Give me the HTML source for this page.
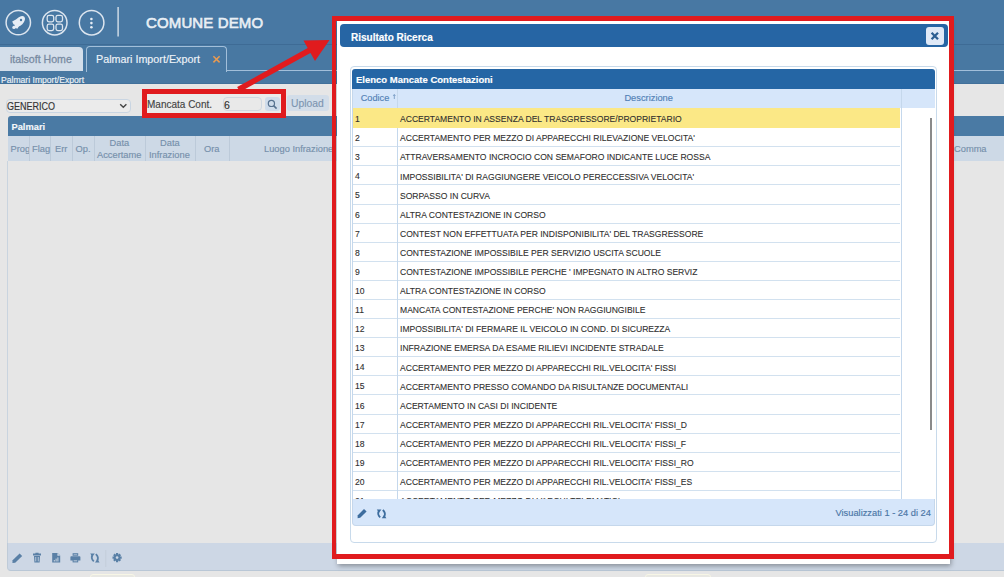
<!DOCTYPE html>
<html><head><meta charset="utf-8">
<style>
*{margin:0;padding:0;box-sizing:border-box}
html,body{width:1004px;height:577px;overflow:hidden}
body{position:relative;background:#e6e6e6;font-family:"Liberation Sans",sans-serif;color:#333}
.a{position:absolute}
.t{position:absolute;white-space:nowrap;line-height:1;-webkit-text-stroke:0.15px currentColor}
.hdr{left:0;top:0;width:1004px;height:44px;background:#4878a3}
.hdrline{left:0;top:43.5px;width:1004px;height:1.5px;background:#3e6b95}
.tabbar{left:0;top:45px;width:1004px;height:39px;background:#4878a2}
.tab1{left:0;top:47px;width:83px;height:24px;background:#d3deea;border-radius:0 4px 0 0}
.tab2{left:86px;top:46px;width:141px;height:26px;border:1px solid #a2bfda;border-bottom:none;border-radius:4px 4px 0 0;background:#4878a2}
.tabline{left:226px;top:70px;width:778px;height:1px;background:#a2bfda}
.ph{left:8px;top:116px;width:996px;height:20px;background:#4a7aa4;border-radius:3px 0 0 0}
.pch{left:8px;top:136px;width:996px;height:25px;background:#cdd9e6}
.pbody{left:7px;top:161px;width:997px;height:382px;border-left:1px solid #c9d4df}
.pfoot{left:7px;top:543px;width:997px;height:28px;background:#cdd7e5;border-left:1px solid #bfcbd8;border-bottom:1px solid #b9c7d6;border-radius:0 0 0 4px}
.cd{position:absolute;top:136px;width:1px;height:25px;background:#bccad9}
.ch{color:#7690ab;font-size:9.3px}
.modal{left:337px;top:20px;width:613px;height:544px;background:#fff;box-shadow:1px 2px 5px rgba(0,0,0,.35)}
.mtitle{left:340px;top:24px;width:608px;height:23px;background:#2665a4;border-radius:4px}
.mclose{left:926px;top:27px;width:18px;height:18px;background:#dfe9f7;border-radius:3px}
.ipanel{left:350px;top:66px;width:587px;height:477px;border:1px solid #c8daeb;border-radius:4px}
.ihead{left:352px;top:69px;width:583px;height:20px;background:#2566a5;border-radius:3px 3px 0 0}
.icolh{left:352px;top:89px;width:583px;height:19px;background:#d6e6fa}
.row{left:0;width:549px;background:#fff;border-top:1px solid #d2e1ef}
.row.sel{background:#fbe886;border-top:none}
.row span{position:absolute;font-size:9.7px;line-height:10px;color:#2e2e2e;white-space:nowrap;-webkit-text-stroke:0.1px #2e2e2e;transform:scaleX(0.883);transform-origin:0 0}
.row .c{left:3px;font-size:8.6px !important;transform:none !important;-webkit-text-stroke:0.1px #2e2e2e !important;margin-top:-0.2px}
.row.sel{z-index:1}
.row .d{left:48px}
.ifoot{left:352px;top:499px;width:583px;height:27px;background:#d6e6fa;border:1px solid #c5d7eb;border-top:none;border-radius:0 0 4px 4px}
.red{border:5px solid #e01b1e}
</style></head><body>

<!-- header -->
<div class="a hdr"></div>
<div class="a hdrline"></div>
<div class="a tabbar"></div>
<svg class="a" style="left:0;top:0" width="120" height="44" viewBox="0 0 120 44">
  <g fill="none" stroke="#dce5ef" stroke-width="1.5">
    <circle cx="18.3" cy="22.6" r="12.2"/>
    <circle cx="54.7" cy="22.7" r="12.3"/>
    <circle cx="91.6" cy="22.7" r="12.3"/>
    <rect x="47.2" y="15.4" width="6.5" height="6.5" rx="1.8" stroke-width="1.3"/>
    <rect x="56.0" y="15.4" width="6.5" height="6.5" rx="1.8" stroke-width="1.3"/>
    <rect x="47.2" y="24.1" width="6.5" height="6.5" rx="1.8" stroke-width="1.3"/>
    <rect x="56.0" y="24.1" width="6.5" height="6.5" rx="1.8" stroke-width="1.3"/>
  </g>
  <g fill="#e6edf5">
    <circle cx="91.4" cy="19" r="1.3"/>
    <circle cx="91.4" cy="23.1" r="1.3"/>
    <circle cx="91.4" cy="27.2" r="1.3"/>
    <!-- rocket -->
    <ellipse cx="19.6" cy="21.4" rx="6.6" ry="3.9" transform="rotate(-45 19.6 21.4)"/>
    <path d="M16.8 19 L12.2 21.6 L13.6 24.6 L16 23.4 Z"/>
    <path d="M20 24.2 L17.4 28.8 L14.4 27.4 L15.6 25 Z"/>
    <circle cx="14" cy="27.4" r="1.7"/>
  </g>
  <circle cx="21" cy="20" r="1.2" fill="#4a7aa4"/>
  <rect x="117.4" y="7" width="1.4" height="29.5" fill="#d5e0ea"/>
</svg>
<div class="t" style="left:146px;top:15px;font-size:15px;color:#e9eff5;letter-spacing:0.13px;-webkit-text-stroke:0.6px #e9eff5">COMUNE DEMO</div>

<div class="a tab1"></div>
<div class="t" style="left:10px;top:54px;font-size:10.6px;color:#788ba2;-webkit-text-stroke:0.3px #788ba2">italsoft Home</div>
<div class="a tab2"></div>
<div class="t" style="left:96px;top:54px;font-size:10.75px;color:#eef3f8">Palmari Import/Export</div>
<svg class="a" style="left:212px;top:55px" width="9" height="9" viewBox="0 0 9 9"><path d="M1.4 1.2 L7.6 7.4 M7.6 1.2 L1.4 7.4" stroke="#e99a50" stroke-width="1.5"/></svg>
<div class="a tabline"></div>
<div class="a" style="left:0;top:83px;width:1004px;height:1px;background:#41709a"></div>
<div class="t" style="left:1px;top:75.5px;font-size:8.6px;color:#eef3f7;-webkit-text-stroke:0.15px #eef3f7">Palmari Import/Export</div>

<!-- toolbar -->
<div class="a" style="left:6px;top:99px;width:125px;height:14px;border:1px solid #c9d5e2;border-radius:4px;background:#ebebeb"></div>
<div class="t" style="left:7px;top:101.5px;font-size:10px;color:#333;transform:scaleX(0.9);transform-origin:0 0">GENERICO</div>
<svg class="a" style="left:119px;top:103px" width="9" height="6" viewBox="0 0 9 6"><path d="M1.2 1.2 L4.3 4.2 L7.4 1.2" fill="none" stroke="#444" stroke-width="1.4"/></svg>
<div class="a" style="left:146px;top:94px;width:135px;height:19px;background:#ebebeb"></div>
<div class="t" style="left:147px;top:100px;font-size:10px;color:#444">Mancata Cont.</div>
<div class="a" style="left:223px;top:97px;width:39px;height:14px;border:1px solid #cfd8e1;border-radius:4px;background:#e9e9e9"></div>
<div class="t" style="left:224px;top:100px;font-size:10.5px;color:#333">6</div>
<div class="a" style="left:265px;top:97px;width:15px;height:14px;background:#cfdceb;border-radius:3px"></div>
<svg class="a" style="left:265px;top:97px" width="16" height="16" viewBox="265 97 16 16"><circle cx="271.4" cy="103.4" r="3.1" fill="none" stroke="#56718f" stroke-width="1.2"/><path d="M273.6 105.6 L276.6 108.6" stroke="#56718f" stroke-width="1.5"/></svg>
<div class="a" style="left:287px;top:95px;width:42px;height:16px;background:#d2dde9;border-radius:3px"></div>
<div class="t" style="left:291px;top:99px;font-size:10.3px;color:#7d95b0">Upload</div>

<!-- palmari panel -->
<div class="a ph"></div>
<div class="t" style="left:11.5px;top:123px;font-size:9.3px;font-weight:bold;color:#f4f7fa">Palmari</div>
<div class="a pch"></div>
<div class="cd" style="left:29px"></div>
<div class="cd" style="left:50px"></div>
<div class="cd" style="left:72px"></div>
<div class="cd" style="left:94px"></div>
<div class="cd" style="left:145px"></div>
<div class="cd" style="left:195px"></div>
<div class="cd" style="left:229px"></div>
<div class="a" style="left:8px;top:136px;width:21px;height:25px;overflow:hidden"><div class="t ch" style="left:2.5px;top:9px">Prog</div></div>
<div class="t ch" style="left:32px;top:145px">Flag</div>
<div class="t ch" style="left:55px;top:145px">Err</div>
<div class="t ch" style="left:75.5px;top:145px">Op.</div>
<div class="t ch" style="left:109.5px;top:139px">Data</div>
<div class="t ch" style="left:97px;top:151px">Accertame</div>
<div class="t ch" style="left:160px;top:139px">Data</div>
<div class="t ch" style="left:149px;top:151px">Infrazione</div>
<div class="t ch" style="left:204px;top:145px">Ora</div>
<div class="t ch" style="left:264px;top:145px">Luogo Infrazione</div>
<div class="t ch" style="left:954px;top:145px">Comma</div>
<div class="a pbody"></div>
<div class="a pfoot"></div>
<svg class="a" style="left:0;top:548px" width="130" height="20" viewBox="0 548 130 20">
  <g fill="#5a80a6">
  <path d="M12.6 560.2 L19.6 553.4 L22.2 555.9 L15.2 562.7 L12.4 563 Z"/>
  <path d="M33 553.6 H41 V555.4 H33 Z M35.4 552.8 H38.6 V553.8 H35.4 Z"/>
  <path d="M34 556 H40 L39.6 562.4 H34.4 Z"/>
  <path d="M52.2 553 H57.6 L60.2 555.6 V562.4 H52.2 Z"/>
  <path d="M72.6 553.2 H78.2 V555.8 H72.6 Z"/>
  <path d="M71.2 556.2 H79.6 Q80.4 556.2 80.4 557 V560.6 H70.4 V557 Q70.4 556.2 71.2 556.2 Z"/>
  <path d="M72.6 559.4 H78.2 V562.4 H72.6 Z"/>
  </g>
  <g fill="#cdd7e5">
  <path d="M57.4 553 V555.8 H60.2 Z"/>
  <rect x="53.8" y="560" width="1" height="1.5"/><rect x="55.6" y="558.6" width="1" height="2.9"/><rect x="57.4" y="557.4" width="1" height="4.1"/>
  <rect x="35.4" y="557" width="0.8" height="4.4"/><rect x="37.8" y="557" width="0.8" height="4.4"/>
  <rect x="73.6" y="560.4" width="3.6" height="0.9"/>
  <rect x="73.6" y="554" width="3.6" height="1.2" opacity="0.5"/>
  </g>
  <g fill="none" stroke="#5a80a6" stroke-width="1.8">
    <path d="M92.4 555 Q90.6 558.4 93.8 561.4"/>
    <path d="M97.2 560.8 Q99.2 557.4 95.8 554.2"/>
  </g>
  <path d="M90.2 553.4 H94.8 L92.4 556.8 Z M99.6 562.4 H95 L97.4 559 Z" fill="#5a80a6"/>
  <rect x="105.3" y="550" width="1" height="17" fill="#c3cedb"/>
  <g stroke="#5a80a6" stroke-width="2.2">
    <path d="M117.1 553 V562.2 M112.5 557.6 H121.7 M113.9 554.4 L120.3 560.8 M120.3 554.4 L113.9 560.8"/>
  </g>
  <circle cx="117.1" cy="557.6" r="3.2" fill="#5a80a6"/>
  <circle cx="117.1" cy="557.6" r="1.3" fill="#cdd7e5"/>
</svg>
<div class="a" style="left:90px;top:574px;width:45px;height:6px;border:1px solid #f7f6e6;border-radius:3px;background:#e8e8e3"></div>
<div class="a" style="left:645px;top:574px;width:66px;height:6px;border:1px solid #f7f6e6;border-radius:3px;background:#e8e8e3"></div>

<!-- modal -->
<div class="a modal"></div>
<div class="a mtitle"></div>
<div class="t" style="left:351px;top:33px;font-size:10px;font-weight:bold;color:#fff">Risultato Ricerca</div>
<div class="a mclose"></div>
<svg class="a" style="left:926px;top:27px" width="18" height="18" viewBox="0 0 18 18"><path d="M5.6 5.8 L12 12.2 M12 5.8 L5.6 12.2" stroke="#2d5f92" stroke-width="2.3"/></svg>
<div class="a ipanel"></div>
<div class="a ihead"></div>
<div class="t" style="left:356px;top:75.2px;font-size:9.5px;font-weight:bold;color:#fff">Elenco Mancate Contestazioni</div>
<div class="a icolh"></div>
<div class="t" style="left:360.7px;top:94.4px;font-size:9.2px;color:#5181b6">Codice</div>
<svg class="a" style="left:392px;top:94px" width="5" height="6" viewBox="0 0 5 6"><path d="M2.3 0.6 V5 M1.2 1.8 L2.3 0.6 L3.4 1.8" fill="none" stroke="#6a8fbb" stroke-width="0.8"/></svg>
<div class="t" style="left:624.4px;top:94.4px;font-size:9.3px;color:#5181b6">Descrizione</div>
<div class="a" style="left:397px;top:89px;width:1px;height:410px;background:#c5d8ec"></div>
<div class="a" style="left:900.5px;top:89px;width:1px;height:410px;background:#c5d8ec"></div>
<div class="a" style="left:352px;top:89px;width:1px;height:410px;background:#c5d8ec"></div>

<div class="a" style="left:353px;top:108px;width:547px;height:391px;overflow:hidden">
<div class="a" style="left:-1px;top:0;width:549px;height:391px">
<div class="a row sel" style="top:0px;height:20px"><span class="c" style="top:6.2px">1</span><span class="d" style="top:6.2px">ACCERTAMENTO IN ASSENZA DEL TRASGRESSORE/PROPRIETARIO</span></div>
<div class="a row" style="top:19px;height:19px"><span class="c" style="top:5.3px">2</span><span class="d" style="top:5.3px">ACCERTAMENTO PER MEZZO DI APPARECCHI RILEVAZIONE VELOCITA'</span></div>
<div class="a row" style="top:38px;height:19px"><span class="c" style="top:5.4px">3</span><span class="d" style="top:5.4px">ATTRAVERSAMENTO INCROCIO CON SEMAFORO INDICANTE LUCE ROSSA</span></div>
<div class="a row" style="top:57px;height:19px"><span class="c" style="top:5.5px">4</span><span class="d" style="top:5.5px">IMPOSSIBILITA' DI RAGGIUNGERE VEICOLO PERECCESSIVA VELOCITA'</span></div>
<div class="a row" style="top:76px;height:20px"><span class="c" style="top:5.6px">5</span><span class="d" style="top:5.6px">SORPASSO IN CURVA</span></div>
<div class="a row" style="top:96px;height:19px"><span class="c" style="top:4.7px">6</span><span class="d" style="top:4.7px">ALTRA CONTESTAZIONE IN CORSO</span></div>
<div class="a row" style="top:115px;height:19px"><span class="c" style="top:4.8px">7</span><span class="d" style="top:4.8px">CONTEST NON EFFETTUATA PER INDISPONIBILITA' DEL TRASGRESSORE</span></div>
<div class="a row" style="top:134px;height:19px"><span class="c" style="top:4.9px">8</span><span class="d" style="top:4.9px">CONTESTAZIONE IMPOSSIBILE PER SERVIZIO USCITA SCUOLE</span></div>
<div class="a row" style="top:153px;height:19px"><span class="c" style="top:5.0px">9</span><span class="d" style="top:5.0px">CONTESTAZIONE IMPOSSIBILE PERCHE ' IMPEGNATO IN ALTRO SERVIZ</span></div>
<div class="a row" style="top:172px;height:19px"><span class="c" style="top:5.1px">10</span><span class="d" style="top:5.1px">ALTRA CONTESTAZIONE IN CORSO</span></div>
<div class="a row" style="top:191px;height:19px"><span class="c" style="top:5.2px">11</span><span class="d" style="top:5.2px">MANCATA CONTESTAZIONE PERCHE' NON RAGGIUNGIBILE</span></div>
<div class="a row" style="top:210px;height:19px"><span class="c" style="top:5.3px">12</span><span class="d" style="top:5.3px">IMPOSSIBILITA' DI FERMARE IL VEICOLO IN COND. DI SICUREZZA</span></div>
<div class="a row" style="top:229px;height:19px"><span class="c" style="top:5.4px">13</span><span class="d" style="top:5.4px">INFRAZIONE EMERSA DA ESAME RILIEVI INCIDENTE STRADALE</span></div>
<div class="a row" style="top:248px;height:19px"><span class="c" style="top:5.5px">14</span><span class="d" style="top:5.5px">ACCERTAMENTO PER MEZZO DI APPARECCHI RIL.VELOCITA' FISSI</span></div>
<div class="a row" style="top:267px;height:19px"><span class="c" style="top:5.6px">15</span><span class="d" style="top:5.6px">ACCERTAMENTO PRESSO COMANDO DA RISULTANZE DOCUMENTALI</span></div>
<div class="a row" style="top:286px;height:20px"><span class="c" style="top:5.7px">16</span><span class="d" style="top:5.7px">ACERTAMENTO IN CASI DI INCIDENTE</span></div>
<div class="a row" style="top:306px;height:19px"><span class="c" style="top:4.8px">17</span><span class="d" style="top:4.8px">ACCERTAMENTO PER MEZZO DI APPARECCHI RIL.VELOCITA' FISSI_D</span></div>
<div class="a row" style="top:325px;height:19px"><span class="c" style="top:4.9px">18</span><span class="d" style="top:4.9px">ACCERTAMENTO PER MEZZO DI APPARECCHI RIL.VELOCITA' FISSI_F</span></div>
<div class="a row" style="top:344px;height:19px"><span class="c" style="top:5.0px">19</span><span class="d" style="top:5.0px">ACCERTAMENTO PER MEZZO DI APPARECCHI RIL.VELOCITA' FISSI_RO</span></div>
<div class="a row" style="top:363px;height:19px"><span class="c" style="top:5.1px">20</span><span class="d" style="top:5.1px">ACCERTAMENTO PER MEZZO DI APPARECCHI RIL.VELOCITA' FISSI_ES</span></div>
<div class="a row" style="top:382px;height:19px"><span class="c" style="top:5.2px">21</span><span class="d" style="top:5.2px">ACCERTAMENTO PER MEZZO DI VARCHI TELEMATICI</span></div>
</div></div>
<div class="a" style="left:397px;top:108px;width:1px;height:391px;background:#c5d8ec"></div>
<div class="a" style="left:930px;top:118px;width:2px;height:312px;background:#8a8a8a"></div>
<div class="a ifoot"></div>
<svg class="a" style="left:352px;top:503px" width="40" height="20" viewBox="352 503 40 20">
  <path d="M357.6 515.4 L364 509 L366.6 511.4 L360.2 517.8 L357.6 518.2 Z" fill="#3d6d9e"/>
  <g fill="none" stroke="#3d6d9e" stroke-width="1.8">
    <path d="M378.8 511 Q377 514.4 380.2 517.4"/>
    <path d="M384.2 516.6 Q386.2 513.2 382.8 510"/>
  </g>
  <path d="M376.8 509.4 H381.4 L379 512.8 Z M386.4 518.2 H381.8 L384.2 514.8 Z" fill="#3d6d9e"/>
</svg>
<div class="t" style="left:835.5px;top:509px;font-size:9.3px;color:#4b76a6">Visualizzati 1 - 24 di 24</div>

<!-- annotations -->
<div class="a red" style="left:142px;top:89.2px;width:143.5px;height:28.4px;border-width:5.2px 5px 5px 5.2px"></div>
<div class="a red" style="left:332px;top:16px;width:622px;height:543px;border-width:5px 5px 5px 4.8px"></div>
<svg class="a" style="left:220px;top:30px" width="120" height="70" viewBox="220 30 120 70">
  <path d="M238.5 89.5 L310 50" stroke="#e01b1e" stroke-width="5.5"/>
  <path d="M329.5 40 L303.5 40.5 L315 61 Z" fill="#e01b1e"/>
</svg>

</body></html>
